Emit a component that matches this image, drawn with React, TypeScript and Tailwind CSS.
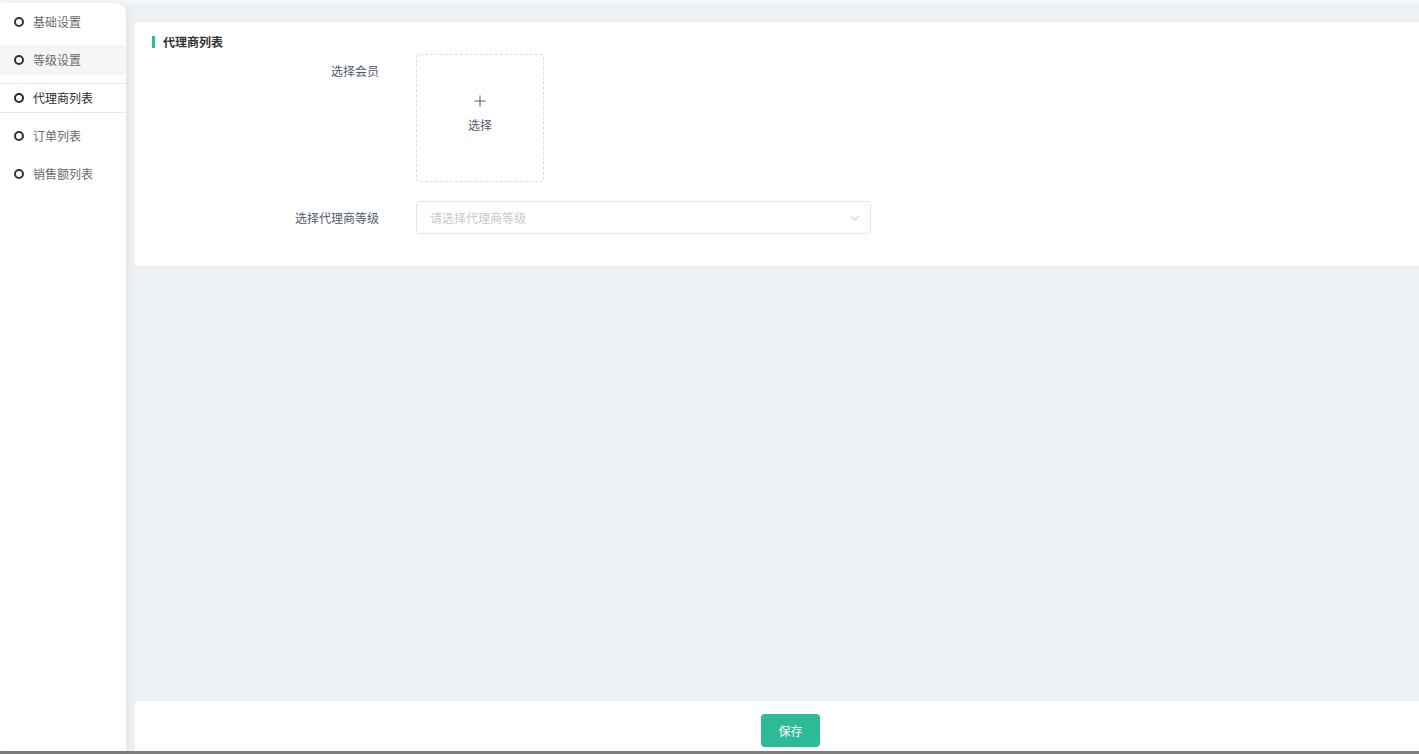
import React from "react";

const items = [
  { label: "基础设置", state: "normal" },
  { label: "等级设置", state: "hover" },
  { label: "代理商列表", state: "active" },
  { label: "订单列表", state: "normal" },
  { label: "销售额列表", state: "normal" },
];

export default function App() {
  return (
    <div
      className="w-[1419px] h-[754px] flex flex-col bg-[#f7f7f7] overflow-hidden"
      style={{ fontFamily: '"Noto Sans CJK SC", "Noto Sans", sans-serif' }}
    >
      <div className="h-[4px] shrink-0" />
      <div className="flex flex-1 min-h-0">
        <aside className="w-[126px] shrink-0 bg-white rounded-tr-[12px] shadow-[3px_0_8px_rgba(0,0,0,0.05)] relative z-10 -mt-[1px]">
          {items.map((it) => (
            <div key={it.label} className="py-[4px]">
              <div
                className={
                  "h-[30px] flex items-center pl-[14px] " +
                  (it.state === "hover" ? "bg-[#f5f5f5] " : "") +
                  (it.state === "active" ? "border-y border-[#e8eaec] " : "")
                }
              >
                <span
                  className={
                    "w-[10px] h-[10px] rounded-full border-2 " +
                    (it.state === "active" ? "border-[#1c2a4a]" : "border-[#333]")
                  }
                />
                <span
                  className={
                    "ml-[9px] text-[12px] leading-none " +
                    (it.state === "active" ? "text-[#2b2b2b]" : "text-[#6b6b6b]")
                  }
                >
                  {it.label}
                </span>
              </div>
            </div>
          ))}
        </aside>
        <main className="flex-1 min-w-0 bg-[#eef1f4] flex flex-col pl-[9px] pt-[18px]">
          <section className="bg-white h-[244px] pl-[17px] pt-[14px]">
            <div className="flex items-center h-[12px]">
              <span className="w-[3px] h-[12px] bg-[#2bbb97]" />
              <span className="ml-[8px] text-[12px] font-semibold text-[#333] leading-none">代理商列表</span>
            </div>
            <div className="flex mt-[6px]">
              <div className="w-[227px] text-right pt-[10px] text-[12px] leading-[14px] text-[#515a6e]">
                选择会员
              </div>
              <div className="ml-[37px] w-[128px] h-[128px] border border-dashed border-[#dcdee2] rounded-[4px] flex flex-col items-center pt-[40px] cursor-pointer">
                <svg width="12" height="12" viewBox="0 0 12 12" fill="none">
                  <path d="M6 0.5V11.5M0.5 6H11.5" stroke="#515a6e" strokeWidth="1" />
                </svg>
                <span className="mt-[8px] text-[12px] leading-[20px] text-[#515a6e]">选择</span>
              </div>
            </div>
            <div className="flex items-center mt-[19px]">
              <div className="w-[227px] text-right text-[12px] leading-[14px] text-[#515a6e]">
                选择代理商等级
              </div>
              <div className="ml-[37px] w-[455px] h-[33px] border border-[#e3e5e9] rounded-[4px] flex items-center justify-between pl-[13px] pr-[9px]">
                <span className="text-[12px] text-[#c5c8ce]">请选择代理商等级</span>
                <svg width="12" height="12" viewBox="0 0 12 12" fill="none">
                  <path d="M2 4.2L6 8L10 4.2" stroke="#c5c8ce" strokeWidth="1" />
                </svg>
              </div>
            </div>
          </section>
          <div className="flex-1" />
          <footer className="bg-white h-[50px] rounded-tl-[4px] pl-[626px] pt-[13px]">
            <button className="w-[59px] h-[33px] rounded-[4px] bg-[#2bbb97] text-white text-[12px]">
              保存
            </button>
          </footer>
        </main>
      </div>
      <div className="h-[3px] shrink-0 bg-[#7d7d7d]" />
    </div>
  );
}
